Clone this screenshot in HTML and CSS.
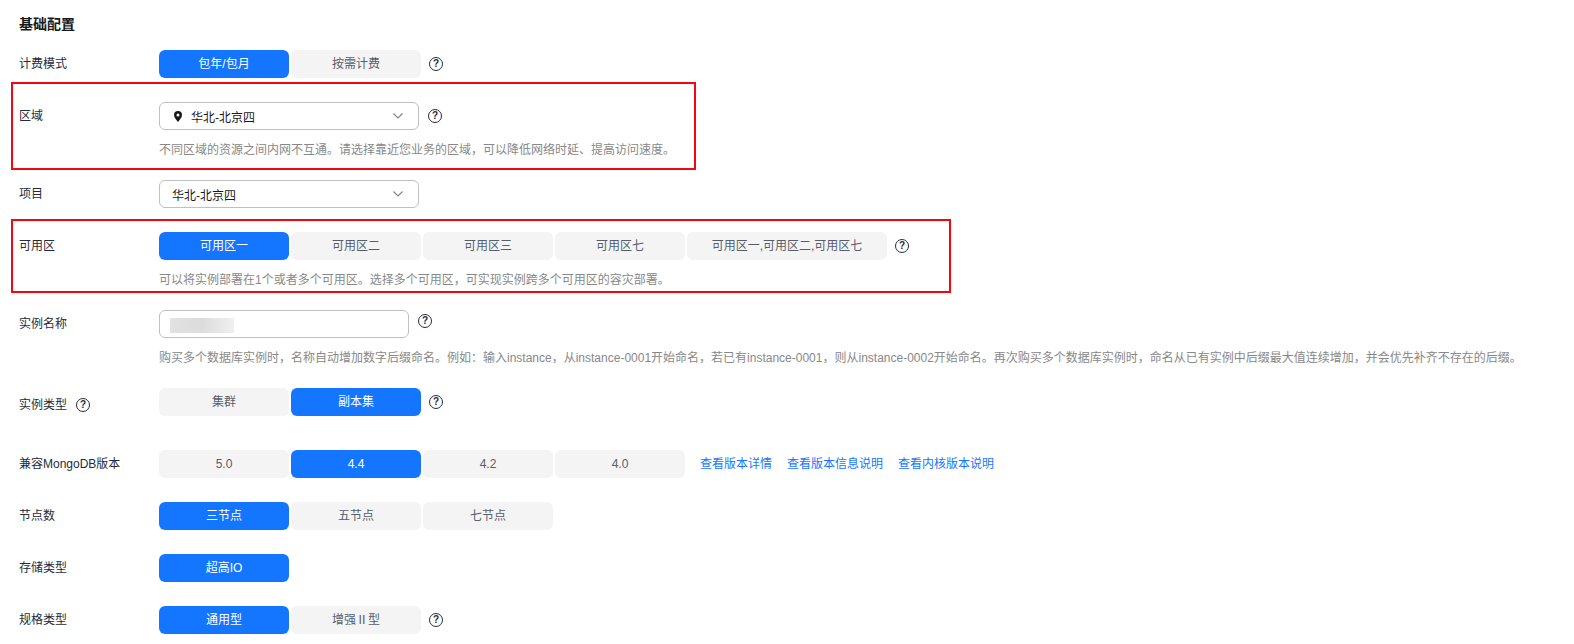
FILE: index.html
```html
<!DOCTYPE html>
<html lang="zh-CN">
<head>
    <meta charset="UTF-8">
    <meta name="viewport" content="width=device-width, initial-scale=1.0">
    <title>基础配置</title>
    <link rel="stylesheet" href="styles.css">
</head>
<body>
    <h2 class="section-title">基础配置</h2>

    <div class="row">
        <div class="row-label">计费模式</div>
        <div class="row-body">
            <div class="control-line">
                <div class="seg-group">
                    <span class="seg active">包年/包月</span>
                    <span class="seg">按需计费</span>
                </div>
                <span class="help">?</span>
            </div>
        </div>
    </div>

    <div class="row">
        <div class="row-label">区域</div>
        <div class="row-body">
            <div class="control-line">
                <div class="select">
                    <svg class="pin" width="8" height="11" viewBox="0 0 8 11">
                        <path fill-rule="evenodd" d="M4 0a4 4 0 0 1 4 4c0 2.6-2.6 5.4-4 7C2.6 9.400 0 6.600 0 4a4 4 0 0 1 4-4zm0 2.500a1.500 1.500 0 1 0 0 3 1.500 1.500 0 0 0 0-3z" fill="#191919"/>
                    </svg>
                    <span class="select-text">华北-北京四</span>
                    <svg class="chevron" width="10" height="6" viewBox="0 0 10 6">
                        <path d="M.5.5L5 5 9.500.5" fill="none" stroke="#7d818c" stroke-width="1.100"/>
                    </svg>
                </div>
                <span class="help">?</span>
            </div>
            <p class="tip">不同区域的资源之间内网不互通。请选择靠近您业务的区域，可以降低网络时延、提高访问速度。</p>
        </div>
    </div>

    <div class="row">
        <div class="row-label">项目</div>
        <div class="row-body">
            <div class="select">
                <span class="select-text">华北-北京四</span>
                <svg class="chevron" width="10" height="6" viewBox="0 0 10 6">
                    <path d="M.5.5L5 5 9.500.5" fill="none" stroke="#7d818c" stroke-width="1.100"/>
                </svg>
            </div>
        </div>
    </div>

    <div class="row">
        <div class="row-label">可用区</div>
        <div class="row-body">
            <div class="control-line">
                <div class="seg-group">
                    <span class="seg active">可用区一</span>
                    <span class="seg">可用区二</span>
                    <span class="seg">可用区三</span>
                    <span class="seg">可用区七</span>
                    <span class="seg seg-wide">可用区一,可用区二,可用区七</span>
                </div>
                <span class="help">?</span>
            </div>
            <p class="tip">可以将实例部署在1个或者多个可用区。选择多个可用区，可实现实例跨多个可用区的容灾部署。</p>
        </div>
    </div>

    <div class="row">
        <div class="row-label">实例名称</div>
        <div class="row-body">
            <div class="control-line control-line-top">
                <div class="name-input"><span class="blurred"></span></div>
                <span class="help">?</span>
            </div>
            <p class="tip">购买多个数据库实例时，名称自动增加数字后缀命名。例如：输入instance，从instance-0001开始命名，若已有instance-0001，则从instance-0002开始命名。再次购买多个数据库实例时，命名从已有实例中后缀最大值连续增加，并会优先补齐不存在的后缀。</p>
        </div>
    </div>

    <div class="row row-spaced">
        <div class="row-label row-label-low">实例类型<span class="help help-label">?</span></div>
        <div class="row-body">
            <div class="control-line">
                <div class="seg-group">
                    <span class="seg">集群</span>
                    <span class="seg active">副本集</span>
                </div>
                <span class="help">?</span>
            </div>
        </div>
    </div>

    <div class="row">
        <div class="row-label">兼容MongoDB版本</div>
        <div class="row-body">
            <div class="control-line">
                <div class="seg-group">
                    <span class="seg">5.0</span>
                    <span class="seg active">4.4</span>
                    <span class="seg">4.2</span>
                    <span class="seg">4.0</span>
                </div>
                <div class="links">
                    <a href="#">查看版本详情</a>
                    <a href="#">查看版本信息说明</a>
                    <a href="#">查看内核版本说明</a>
                </div>
            </div>
        </div>
    </div>

    <div class="row">
        <div class="row-label">节点数</div>
        <div class="row-body">
            <div class="seg-group">
                <span class="seg active">三节点</span>
                <span class="seg">五节点</span>
                <span class="seg">七节点</span>
            </div>
        </div>
    </div>

    <div class="row">
        <div class="row-label">存储类型</div>
        <div class="row-body">
            <div class="seg-group">
                <span class="seg active">超高IO</span>
            </div>
        </div>
    </div>

    <div class="row row-last">
        <div class="row-label">规格类型</div>
        <div class="row-body">
            <div class="control-line">
                <div class="seg-group">
                    <span class="seg active">通用型</span>
                    <span class="seg">增强Ⅱ型</span>
                </div>
                <span class="help">?</span>
            </div>
        </div>
    </div>

    <!-- 红框标注 -->
    <div class="mark mark-region"></div>
    <div class="mark mark-zone"></div>
</body>
</html>
```

FILE: styles.css
```css
* {
    margin: 0;
    padding: 0;
    box-sizing: border-box;
}

body {
    font-family: "Liberation Sans", "Noto Sans CJK SC", sans-serif;
    font-size: 12px;
    color: #252b3a;
    background-color: #fff;
    padding: 14px 0 10px 19px;
    position: relative;
    overflow: hidden;
}

.section-title {
    font-size: 14px;
    font-weight: bold;
    line-height: 20px;
    color: #191919;
    margin-bottom: 16px;
}

/* 表单行 */
.row {
    display: flex;
    margin-bottom: 24px;
}

.row-spaced {
    margin-bottom: 34px;
}

.row-last {
    margin-bottom: 0;
}

.row-label {
    width: 140px;
    flex-shrink: 0;
    height: 28px;
    line-height: 27px;
    display: flex;
    align-items: center;
}

.row-label-low {
    padding-top: 6px;
}

.row-body {
    min-width: 0;
}

.control-line {
    display: flex;
    align-items: center;
}

.control-line-top {
    align-items: flex-start;
}

.control-line-top .help {
    margin-top: 4px;
}

/* 分段按钮 */
.seg-group {
    display: flex;
    gap: 2px;
}

.seg {
    width: 130px;
    height: 28px;
    line-height: 28px;
    text-align: center;
    color: #575d6c;
    background-color: #f4f4f4;
    border-radius: 6px;
}

.seg-wide {
    width: 200px;
}

.seg.active {
    color: #fff;
    background-color: #1476ff;
}

/* 问号图标 */
.help {
    width: 14px;
    height: 14px;
    margin-left: 8px;
    border: 1.2px solid #252b3a;
    border-radius: 50%;
    font-size: 10px;
    font-weight: bold;
    line-height: 12px;
    text-align: center;
    color: #252b3a;
    flex-shrink: 0;
}

.help-label {
    margin-left: 9px;
}

.select + .help,
.name-input + .help {
    margin-left: 9px;
}

/* 下拉框 */
.select {
    width: 260px;
    height: 28px;
    padding: 0 15px 0 12px;
    border: 1px solid #c0c0c0;
    border-radius: 6px;
    display: flex;
    align-items: center;
    color: #191919;
}

.pin {
    margin: 0 9px 0 2px;
}

.select-text {
    flex: 1;
}

.name-input {
    width: 250px;
    height: 28px;
    padding: 7px 10px;
    border: 1px solid #c0c0c0;
    border-radius: 6px;
}

.blurred {
    display: block;
    width: 64px;
    height: 15px;
    background: linear-gradient(90deg, #e2e2e2, #dcdcdc 50%, #f0f0f0);
}

.tip {
    margin-top: 13px;
    margin-bottom: -1px;
    line-height: 14px;
    color: #888;
    white-space: nowrap;
}

.links {
    display: flex;
    gap: 15px;
    margin-left: 15px;
    line-height: 26px;
}

.links a {
    color: #1476ff;
    text-decoration: none;
}

/* 红框标注，盖在表单上面 */
.mark {
    position: absolute;
    border: 2px solid #f5060f;
    pointer-events: none;
}

.mark-region {
    left: 11px;
    top: 82px;
    width: 685px;
    height: 88px;
}

.mark-zone {
    left: 11px;
    top: 219px;
    width: 940px;
    height: 74px;
}
```
